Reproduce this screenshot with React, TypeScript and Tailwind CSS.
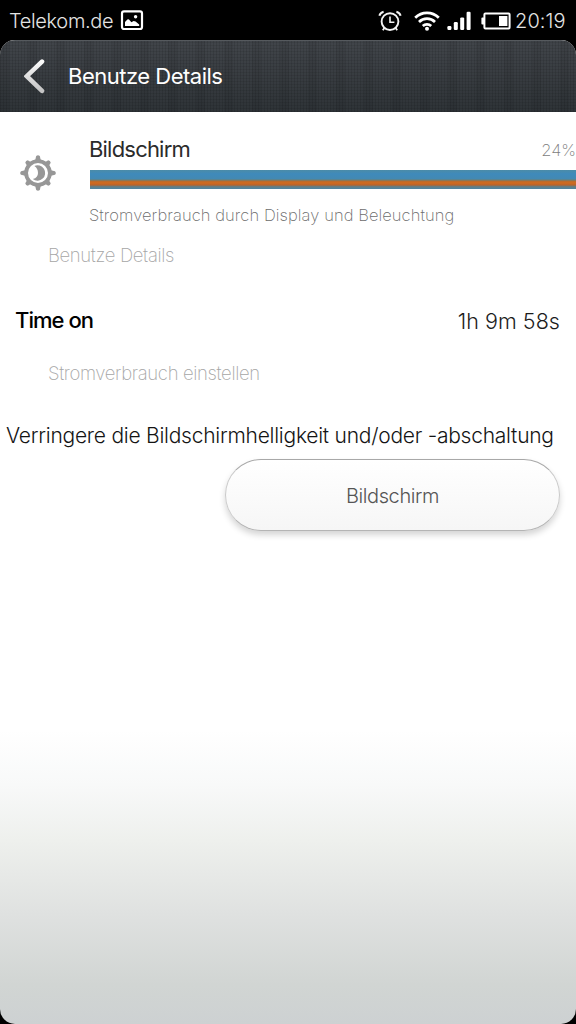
import type { ReactNode } from "react";

function PictureIcon() {
  return (
    <svg width="24" height="22" viewBox="0 0 24 22" className="shrink-0">
      <rect x="2" y="1.4" width="20" height="17.6" rx="2" fill="none" stroke="#fff" strokeWidth="2.2" />
      <path d="M5 16v-4l2.4-2.6q.8-.6 1.6.2l2.4 2.6 2.2-1.2 2 .4 3.6 3.2V16z" fill="#fff" />
      <circle cx="15.6" cy="6.8" r="1.7" fill="#fff" />
    </svg>
  );
}

function AlarmIcon() {
  return (
    <svg width="24" height="22" viewBox="0 0 24 22" className="shrink-0" fill="none" stroke="#f4f4f4">
      <circle cx="12" cy="11.6" r="8.4" strokeWidth="1.9" />
      <path d="M12 6.6v5.6h4.4" strokeWidth="1.6" />
      <path d="M1.4 5.8Q2.2 2.6 5.6 1.8M22.6 5.8Q21.8 2.6 18.4 1.8" strokeWidth="2" />
      <path d="M6.4 18l-1.6 2.2M17.6 18l1.6 2.2" strokeWidth="1.8" />
    </svg>
  );
}

function WifiIcon() {
  return (
    <svg width="26" height="20" viewBox="0 0 26 20" className="shrink-0" fill="none" stroke="#fff" strokeWidth="2.7">
      <path d="M1.2 6.8a16.6 16.6 0 0 1 23.6 0" />
      <path d="M5 11a11.3 11.3 0 0 1 16 0" />
      <path d="M8.8 15a6 6 0 0 1 8.4 0" />
      <circle cx="13" cy="17.8" r="2" fill="#fff" stroke="none" />
    </svg>
  );
}

function SignalIcon() {
  return (
    <svg width="24" height="20" viewBox="0 0 24 20" className="shrink-0" fill="#fff">
      <rect x="0.4" y="15" width="4" height="4" rx="1.2" />
      <rect x="6.8" y="11" width="4" height="8" rx="1.2" />
      <rect x="13.2" y="6.4" width="4" height="12.6" rx="1.2" />
      <rect x="19.6" y="0.8" width="4" height="18.2" rx="1.2" />
    </svg>
  );
}

function BatteryIcon() {
  return (
    <svg width="30" height="18" viewBox="0 0 30 18" className="shrink-0">
      <rect x="3.4" y="1.6" width="25.2" height="14.8" rx="1" fill="none" stroke="#fff" strokeWidth="2" />
      <rect x="0.4" y="5.6" width="3" height="6.8" rx="1" fill="#fff" />
      <rect x="18" y="4" width="8.4" height="10" fill="#fff" />
    </svg>
  );
}

const TEETH = [0, 45, 90, 135, 180, 225, 270, 315];

function BrightnessIcon() {
  return (
    <svg width="36" height="36" viewBox="0 0 36 36" className="shrink-0">
      <g fill="#979797">
        {TEETH.map((angle) => (
          <path
            key={angle}
            d={angle % 90 ? "M15.2 6l1-4.2q1.8-1.2 3.6 0l1 4.2z" : "M15 6l1.2-5q1.8-1.6 3.6 0l1.2 5z"}
            transform={`rotate(${angle} 18 18)`}
          />
        ))}
      </g>
      <circle cx="18" cy="18" r="11.9" fill="none" stroke="#979797" strokeWidth="3.8" />
      <path d="M14.4 10.9a7.7 7.7 0 1 1 -1.6 13.2c3.6-1 5.2-3.4 5.2-6.2 0-3-1.2-5.4-3.6-7z" fill="#979797" />
    </svg>
  );
}

function StatusBar() {
  return (
    <div className="flex h-10 items-center pt-0.5 pr-[9px] pl-[9px] text-[20px] text-[#e4e4e4]">
      <span className="mr-2 w-[103px] tracking-[-0.35px]">Telekom.de</span>
      <PictureIcon />
      <div className="flex-1" />
      <AlarmIcon />
      <div className="w-3" />
      <WifiIcon />
      <div className="w-[7px]" />
      <SignalIcon />
      <div className="w-[10px]" />
      <BatteryIcon />
      <span className="ml-1 w-[52px] tracking-[0.1px]">20:19</span>
    </div>
  );
}

function Header() {
  return (
    <header className="flex h-[72px] items-center border-t border-[#565a5e] bg-[repeating-linear-gradient(90deg,rgba(0,0,0,0.1)_0_1px,transparent_1px_3px),repeating-linear-gradient(90deg,rgba(0,0,0,0.06)_0_9px,transparent_9px_28px),repeating-linear-gradient(0deg,rgba(0,0,0,0.08)_0_1px,transparent_1px_3px),linear-gradient(#41454a,#2e3337)] pl-6">
      <svg width="22" height="36" viewBox="0 0 22 36" className="shrink-0">
        <defs>
          <linearGradient id="chevron" x1="0" y1="0" x2="0" y2="1">
            <stop offset="0" stopColor="#fafafa" />
            <stop offset="1" stopColor="#c4c4c4" />
          </linearGradient>
        </defs>
        <path d="M18 2.6L2.8 17.2l15.2 14.6" fill="none" stroke="url(#chevron)" strokeWidth="4.6" strokeLinecap="round" />
      </svg>
      <h1 className="ml-[22px] text-[22px] font-normal tracking-[-0.5px] text-white">Benutze Details</h1>
    </header>
  );
}

function SectionLabel({ children }: { children: ReactNode }) {
  return (
    <h2 className="flex h-8 items-center pt-0.5 pl-12 text-[18.5px] font-extralight tracking-[-0.35px] text-[#a6a6a6]">
      {children}
    </h2>
  );
}

export default function App() {
  return (
    <div className="h-[1024px] w-[576px] overflow-hidden bg-black font-['Inter','Liberation_Sans',sans-serif] font-light whitespace-nowrap">
      <StatusBar />
      <div className="flex h-[984px] flex-col overflow-hidden rounded-[15px] bg-[linear-gradient(#fff_0,#fff_690px,#f8f9f9_745px,#eef0ed_800px,#dfe1e0_875px,#d1d5d3_945px,#cdd1d2_984px)]">
        <Header />
        <section className="flex pt-[23px]">
          <div className="w-[89px] shrink-0 pt-5 pl-5">
            <BrightnessIcon />
          </div>
          <div className="flex-1">
            <div className="flex h-7 items-center justify-between">
              <span className="text-[22px] font-normal tracking-[-0.8px] text-[#2b2b2b]">Bildschirm</span>
              <span className="pt-0.5 text-[16.5px] font-extralight text-[#7c7c7c]">24%</span>
            </div>
            <div className="mt-[7px] ml-px h-[19px] bg-[linear-gradient(#4b8ca8_0,#3f8abb_4px,#4389b2_9px,#6f7d70_10px,#bd6b2b_11.5px,#d36a1d_13px,#b7642c_15px,#6b7b7c_16.5px,#4a86a6_19px)]" />
            <p className="mt-[14px] h-6 text-[16.5px] leading-6 font-extralight tracking-[0.08px] text-[#6c6c6c]">
              Stromverbrauch durch Display und Beleuchtung
            </p>
          </div>
        </section>
        <div className="mt-3">
          <SectionLabel>Benutze Details</SectionLabel>
        </div>
        <div className="mt-3 flex h-[74px] items-center justify-between pr-4 pl-[15px] text-[22px] text-black">
          <span className="font-medium tracking-[-0.95px]">Time on</span>
          <span className="pt-0.5 text-[21.5px] tracking-[0.05px] text-[#1c1c1c]">1h 9m 58s</span>
        </div>
        <SectionLabel>Stromverbrauch einstellen</SectionLabel>
        <p className="mt-[29px] h-9 pl-1.5 text-[21px] leading-9 tracking-[-0.25px] text-[#141414]">
          Verringere die Bildschirmhelligkeit und/oder -abschaltung
        </p>
        <button className="mt-[5px] mr-4 h-[72px] w-[335px] self-end rounded-full border border-[#c9c9c9] border-t-[#a8a8a8] border-b-[#b4b4b4] bg-linear-to-b from-white to-[#f6f6f6] pt-0.5 text-[20px] tracking-[-0.4px] text-[#555] shadow-[0_4px_6px_rgba(0,0,0,0.17)]">
          Bildschirm
        </button>
      </div>
    </div>
  );
}
